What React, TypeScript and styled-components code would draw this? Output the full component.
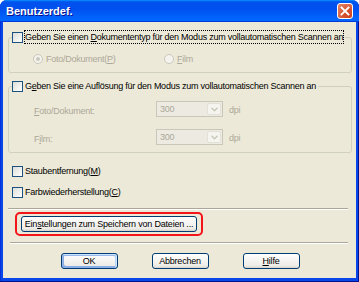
import * as React from 'react';
import styled, { createGlobalStyle } from 'styled-components';

const GlobalStyle = createGlobalStyle`
  html, body {
    margin: 0;
    padding: 0;
    background: #ffffff;
  }
`

const Window = styled.div`
  width: 359px;
  height: 282px;
  display: flex;
  flex-direction: column;
  border-radius: 7px 7px 0 0;
  overflow: hidden;
  background: #0846e8;
  box-shadow: inset -1px -1px #00138c, inset 1px 0 #0831d9;
  font-family: "Liberation Sans", Arial, sans-serif;
  font-size: 9px;
  letter-spacing: -0.25px;
  color: #000;
`

const TitleBar = styled.div`
  height: 22px;
  flex: none;
  display: flex;
  align-items: center;
  justify-content: space-between;
  padding: 0 6px;
  background: linear-gradient(180deg, #0997ff, #0053ee 8%, #0050ee 40%, #0066ff 88%, #0066ff 93%, #005bff 95%, #003dd7 96%, #003dd7);
`

const Title = styled.span`
  color: #fff;
  font-weight: bold;
  font-size: 11px;
  letter-spacing: 0;
  text-shadow: 1px 1px #0f1089;
  padding-bottom: 1px;
`

const CloseButton = styled.span`
  width: 16px;
  height: 16px;
  box-sizing: border-box;
  border: 1px solid #fff;
  border-radius: 3px;
  background: radial-gradient(circle at 85% 85%, #cc4622 0%, #d65330 40%, #e4896a 100%);
  display: flex;
  align-items: center;
  justify-content: center;
`

const Body = styled.div`
  flex: 1;
  margin: 0 3px 4px 3px;
  padding: 8px 4px 0 5px;
  background: #ece9d8;
  display: flex;
  flex-direction: column;
`

const Group = styled.fieldset<{ $mt: number }>`
  margin: ${(p) => p.$mt}px 0 0 0;
  padding: 0;
  min-width: 0;
  border: 1px solid #d0d0bf;
  border-radius: 3px;
`

const Legend = styled.legend`
  margin-left: 3px;
  padding: 0 1px 0 0;
`

const CheckRow = styled.span<{ $mt?: number; $ml?: number }>`
  display: flex;
  align-items: center;
  gap: 1px;
  height: 14px;
  margin-top: ${(p) => p.$mt || 0}px;
  margin-left: ${(p) => p.$ml || 0}px;
`

const CheckBox = styled.span`
  width: 11px;
  height: 11px;
  box-sizing: border-box;
  border: 1px solid #1c5180;
  background: linear-gradient(135deg, #dcdcd7, #ffffff);
  flex: none;
`

const Label = styled.span<{ $focus?: boolean; $disabled?: boolean }>`
  line-height: 12px;
  white-space: nowrap;
  border: 1px ${(p) => (p.$focus ? 'dotted #000' : 'solid transparent')};
  color: ${(p) => (p.$disabled ? '#aca899' : '#000')};
`

const GroupContent = styled.div<{ $pt: number; $pb: number }>`
  display: flex;
  flex-direction: column;
  gap: 12px;
  padding: ${(p) => p.$pt}px 0 ${(p) => p.$pb}px 0;
`

const RadioRow = styled.div`
  display: flex;
  align-items: center;
  height: 14px;
  padding-left: 24px;
`

const RadioItem = styled.span<{ $width?: number }>`
  display: flex;
  align-items: center;
  gap: 3px;
  width: ${(p) => (p.$width ? `${p.$width}px` : 'auto')};
  color: #aca899;
`

const Radio = styled.span<{ $checked?: boolean }>`
  width: 10px;
  height: 10px;
  box-sizing: border-box;
  border-radius: 50%;
  border: 1px solid #cac8bb;
  background: #f4f3ee;
  display: flex;
  align-items: center;
  justify-content: center;
  flex: none;

  &::after {
    content: '';
    width: 4px;
    height: 4px;
    border-radius: 50%;
    background: ${(p) => (p.$checked ? '#cac8bb' : 'transparent')};
  }
`

const FieldRow = styled.div`
  display: flex;
  align-items: center;
  height: 16px;
  padding-left: 25px;
  color: #aca899;
`

const FieldLabel = styled.span`
  width: 122px;
  padding-top: 3px;
`

const Select = styled.div`
  width: 67px;
  height: 16px;
  box-sizing: border-box;
  border: 1px solid #c9c7ba;
  background: #edebe1;
  display: flex;
  align-items: center;
  justify-content: space-between;
  padding: 0 1px 0 3px;
`

const SelectArrow = styled.span`
  width: 14px;
  height: 12px;
  box-sizing: border-box;
  border: 1px solid #e3e1d6;
  border-radius: 2px;
  background: #f5f4ef;
  display: flex;
  align-items: center;
  justify-content: center;
`

const Unit = styled.span`
  margin-left: 6px;
  padding-top: 2px;
`

const Separator = styled.div<{ $mt: number; $ml: number }>`
  margin: ${(p) => p.$mt}px 4px 0 ${(p) => p.$ml}px;
  border-top: 1px solid #aca899;
  border-bottom: 1px solid #fff;
`

const Highlight = styled.div`
  align-self: flex-start;
  margin: 2px 0 0 7px;
  padding: 2px 4px;
  border: 2px solid #f2161a;
  border-radius: 5px;
`

const Button = styled.button<{ $width: number; $default?: boolean }>`
  width: ${(p) => p.$width}px;
  height: 16px;
  padding: 0;
  border: 1px solid #003c74;
  border-radius: 3px;
  background: linear-gradient(180deg, #ffffff, #ecebe6 86%, #d6d0c5);
  box-shadow: ${(p) =>
    p.$default
      ? 'inset -1px 1px #cee7ff, inset 1px 2px #98b8ea, inset -2px 2px #bcd4f6, inset 1px -1px #89ade4, inset 2px -2px #89ade4'
      : 'none'};
  font-family: "Liberation Sans", Arial, sans-serif;
  font-size: 9px;
  letter-spacing: -0.2px;
  color: #000;
  line-height: 14px;
`

const ButtonRow = styled.div`
  display: flex;
  justify-content: center;
  gap: 34px;
  margin-top: 9px;
`

const Chevron = () => (
  <svg width="7" height="5" viewBox="0 0 7 5">
    <path d="M0.5 0.8 L3.5 3.8 L6.5 0.8" fill="none" stroke="#c9c7ba" strokeWidth="1.4" />
  </svg>
)

const CloseX = () => (
  <svg width="10" height="10" viewBox="0 0 10 10">
    <path d="M1.5 1.5 L8.5 8.5 M8.5 1.5 L1.5 8.5" stroke="#fff" strokeWidth="1.8" strokeLinecap="square" />
  </svg>
)

export default function App() {
  return (
    <>
      <GlobalStyle />
      <Window>
        <TitleBar>
          <Title>Benutzerdef.</Title>
          <CloseButton>
            <CloseX />
          </CloseButton>
        </TitleBar>
        <Body>
          <Group $mt={0}>
            <Legend>
              <CheckRow>
                <CheckBox />
                <Label $focus>
                  Geben Sie einen <u>D</u>okumententyp für den Modus zum vollautomatischen Scannen an
                </Label>
              </CheckRow>
            </Legend>
            <GroupContent $pt={8} $pb={6}>
              <RadioRow>
                <RadioItem $width={131}>
                  <Radio $checked />
                  <span>Foto/Dokument(<u>P</u>)</span>
                </RadioItem>
                <RadioItem>
                  <Radio />
                  <span><u>F</u>ilm</span>
                </RadioItem>
              </RadioRow>
            </GroupContent>
          </Group>

          <Group $mt={6}>
            <Legend>
              <CheckRow>
                <CheckBox />
                <Label>
                  G<u>e</u>ben Sie eine Auflösung für den Modus zum vollautomatischen Scannen an
                </Label>
              </CheckRow>
            </Legend>
            <GroupContent $pt={8} $pb={7}>
              <FieldRow>
                <FieldLabel><u>F</u>oto/Dokument:</FieldLabel>
                <Select>
                  <span>300</span>
                  <SelectArrow><Chevron /></SelectArrow>
                </Select>
                <Unit>dpi</Unit>
              </FieldRow>
              <FieldRow>
                <FieldLabel>F<u>i</u>lm:</FieldLabel>
                <Select>
                  <span>300</span>
                  <SelectArrow><Chevron /></SelectArrow>
                </Select>
                <Unit>dpi</Unit>
              </FieldRow>
            </GroupContent>
          </Group>

          <CheckRow $mt={11} $ml={4}>
            <CheckBox />
            <Label>Staubentfernung(<u>M</u>)</Label>
          </CheckRow>
          <CheckRow $mt={7} $ml={4}>
            <CheckBox />
            <Label>Farbwiederherstellung(<u>C</u>)</Label>
          </CheckRow>

          <Separator $mt={9} $ml={0} />

          <Highlight>
            <Button $width={176}>
              Ein<u>s</u>tellungen zum Speichern von Dateien ...
            </Button>
          </Highlight>

          <Separator $mt={6} $ml={2} />

          <ButtonRow>
            <Button $width={57} $default>OK</Button>
            <Button $width={57}>Abbrechen</Button>
            <Button $width={57}><u>H</u>ilfe</Button>
          </ButtonRow>
        </Body>
      </Window>
    </>
  );
}
